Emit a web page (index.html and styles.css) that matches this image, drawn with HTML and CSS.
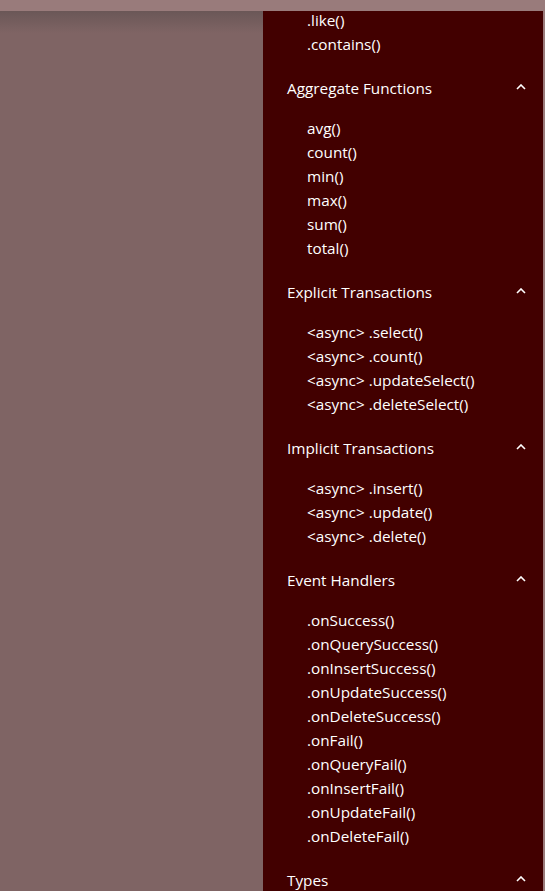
FILE: index.html
```html
<!DOCTYPE html>
<html lang="en">

<head>
  <meta charset="UTF-8">
  <meta name="viewport" content="width=device-width, initial-scale=1.0">
  <title>Docs</title>
  <link rel="stylesheet" href="styles.css">
</head>

<body>
  <div class="topbar"></div>
  <div class="main">
    <div class="backdrop"></div>
    <nav class="drawer">
      <ul class="items first">
        <li>.like()</li>
        <li>.contains()</li>
      </ul>

      <div class="section">
        <div class="heading">Aggregate Functions <svg class="chev" viewBox="0 0 10 6"><polyline points="1,5 5,1 9,5" /></svg></div>
        <ul class="items">
          <li>avg()</li>
          <li>count()</li>
          <li>min()</li>
          <li>max()</li>
          <li>sum()</li>
          <li>total()</li>
        </ul>
      </div>

      <div class="section">
        <div class="heading">Explicit Transactions <svg class="chev" viewBox="0 0 10 6"><polyline points="1,5 5,1 9,5" /></svg></div>
        <ul class="items">
          <li>&lt;async&gt; .select()</li>
          <li>&lt;async&gt; .count()</li>
          <li>&lt;async&gt; .updateSelect()</li>
          <li>&lt;async&gt; .deleteSelect()</li>
        </ul>
      </div>

      <div class="section">
        <div class="heading">Implicit Transactions <svg class="chev" viewBox="0 0 10 6"><polyline points="1,5 5,1 9,5" /></svg></div>
        <ul class="items">
          <li>&lt;async&gt; .insert()</li>
          <li>&lt;async&gt; .update()</li>
          <li>&lt;async&gt; .delete()</li>
        </ul>
      </div>

      <div class="section">
        <div class="heading">Event Handlers <svg class="chev" viewBox="0 0 10 6"><polyline points="1,5 5,1 9,5" /></svg></div>
        <ul class="items">
          <li>.onSuccess()</li>
          <li>.onQuerySuccess()</li>
          <li>.onInsertSuccess()</li>
          <li>.onUpdateSuccess()</li>
          <li>.onDeleteSuccess()</li>
          <li>.onFail()</li>
          <li>.onQueryFail()</li>
          <li>.onInsertFail()</li>
          <li>.onUpdateFail()</li>
          <li>.onDeleteFail()</li>
        </ul>
      </div>

      <div class="section">
        <div class="heading">Types <svg class="chev" viewBox="0 0 10 6"><polyline points="1,5 5,1 9,5" /></svg></div>
      </div>
    </nav>
    <div class="edge"></div>
  </div>
</body>

</html>
```

FILE: styles.css
```css
* {
  margin: 0;
  padding: 0;
  box-sizing: border-box;
}

body {
  height: 100vh;
  display: flex;
  flex-direction: column;
  overflow: hidden;
  background-color: #7f6464;
  font-family: "Open Sans", "Noto Sans", sans-serif;
  font-size: 15.3px;
  color: #ffffff;
}

.topbar {
  height: 11px;
  background-color: #997b7b;
}

.main {
  flex: 1;
  display: flex;
  min-height: 0;
}

.backdrop {
  flex: 1;
  background: linear-gradient(#6a5757, #7f6464 22px);
}

.drawer {
  width: 280px;
  background-color: #420000;
  overflow: hidden;
}

.edge {
  width: 2px;
  background-color: #9a7b7b;
}

.items {
  list-style: none;
  padding: 4px 0 8px 44px;
}

.items li {
  height: 24px;
  line-height: 24px;
  white-space: nowrap;
}

.items.first {
  margin-top: -7px;
}

.heading {
  height: 48px;
  padding: 0 17px 0 24px;
  display: flex;
  align-items: center;
  justify-content: space-between;
}

.chev {
  width: 10px;
  height: 6px;
  margin-bottom: 2px;
  fill: none;
  stroke: #ffffff;
  stroke-width: 1.6;
}
```
